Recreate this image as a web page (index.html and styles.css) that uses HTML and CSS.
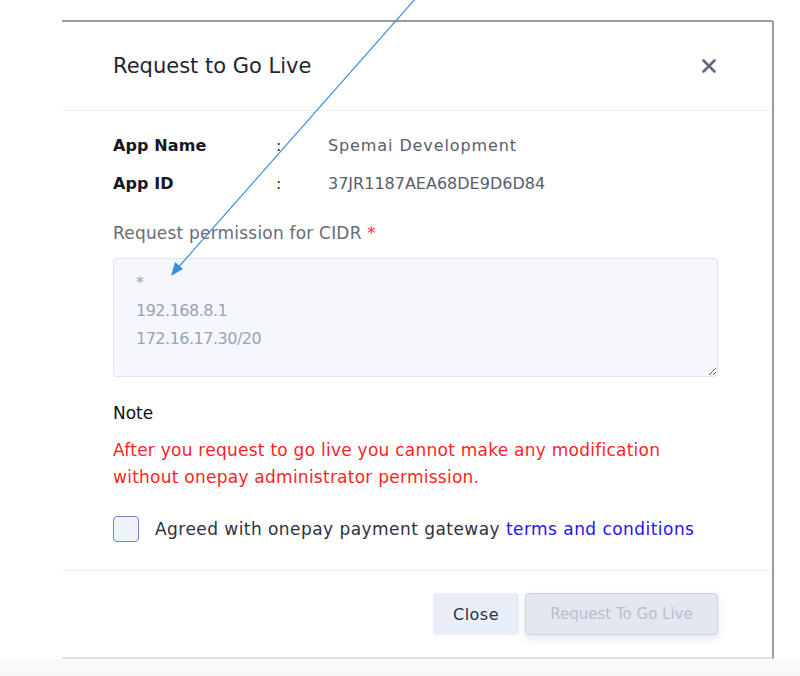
FILE: index.html
```html
<!DOCTYPE html>
<html lang="en">
<head>
    <meta charset="UTF-8">
    <meta name="viewport" content="width=device-width, initial-scale=1.0">
    <title>Request to Go Live</title>
    <link rel="stylesheet" href="styles.css">
</head>
<body>
    <div class="stage">
        <div class="modal">
            <div class="modal-header">
                <h2 class="modal-title">Request to Go Live</h2>
                <button class="btn-close" type="button" aria-label="Close">
                    <svg width="16" height="16" viewBox="0 0 16 16">
                        <path d="M2.5 2.5 L13.5 13.5 M13.5 2.5 L2.5 13.5" stroke="#5f6b7d" stroke-width="2.6" stroke-linecap="round"/>
                    </svg>
                </button>
            </div>

            <div class="modal-body">
                <div class="info-row">
                    <span class="info-label">App Name</span>
                    <span class="info-sep">:</span>
                    <span class="info-value info-name">Spemai Development</span>
                </div>
                <div class="info-row">
                    <span class="info-label">App ID</span>
                    <span class="info-sep">:</span>
                    <span class="info-value info-id">37JR1187AEA68DE9D6D84</span>
                </div>

                <label class="field-label" for="cidr">Request permission for CIDR <span class="req">*</span></label>
                <textarea id="cidr" class="cidr-input" placeholder="*&#10;192.168.8.1&#10;172.16.17.30/20"></textarea>

                <div class="note-title">Note</div>
                <p class="note-text">After you request to go live you cannot make any modification without onepay administrator permission.</p>

                <label class="agree">
                    <input type="checkbox" class="agree-box">
                    <span>Agreed with onepay payment gateway <a href="#" class="terms">terms and conditions</a></span>
                </label>
            </div>

            <div class="modal-footer">
                <button class="btn btn-light" type="button">Close</button>
                <button class="btn btn-primary" type="button" disabled>Request To Go Live</button>
            </div>
        </div>
        <div class="backdrop-edge"></div>
    </div>

    <!-- pointer to the CIDR wildcard line -->
    <svg class="callout" width="800" height="676" viewBox="0 0 800 676">
        <line x1="416" y1="-2" x2="176" y2="270" stroke="#3a8ee0" stroke-width="1.2"/>
        <polygon points="171,276 175,262 183,269" fill="#3a8ee0"/>
    </svg>
</body>
</html>
```

FILE: styles.css
```css
body {
    margin: 0;
    background: #ffffff;
    font-family: 'DejaVu Sans', 'Open Sans', sans-serif;
    color: #1f2433;
}
.stage {
    position: relative;
    padding-top: 20px;
}
.modal {
    margin-left: 62px;
    width: 710px;
    background: #fff;
    border-top: 2px solid #9b9b9b;
    border-right: 2px solid #9b9b9b;
    border-bottom: 2px solid #dbe1ef;
    border-top-right-radius: 3px;
}
.modal-header {
    display: flex;
    align-items: center;
    justify-content: space-between;
    height: 88px;
    padding: 0 54px 0 51px;
    border-bottom: 1px solid #edf1f7;
}
.modal-title {
    margin: 0;
    font-size: 21px;
    font-weight: normal;
    color: #1f2433;
}
.btn-close {
    border: none;
    background: none;
    padding: 0;
    width: 18px;
    height: 18px;
    display: flex;
    align-items: center;
    justify-content: center;
    cursor: pointer;
}
.modal-body {
    padding: 16px 54px 28px 51px;
    font-size: 17px;
    letter-spacing: 0.45px;
}
.info-row {
    display: flex;
    line-height: 38px;
    font-size: 16px;
}
.info-label {
    width: 163px;
    font-weight: bold;
    letter-spacing: 0.1px;
    color: #16181f;
}
.info-sep {
    width: 52px;
    color: #333;
}
.info-value {
    color: #5a5d6c;
}
.info-name {
    letter-spacing: 0.9px;
}
.info-id {
    letter-spacing: 0;
}
.field-label {
    display: block;
    margin-top: 18px;
    color: #686b78;
    line-height: 24px;
    letter-spacing: 0.2px;
}
.req {
    color: #f0334d;
}
.cidr-input {
    display: block;
    box-sizing: border-box;
    width: 100%;
    height: 119px;
    margin-top: 13px;
    padding: 10px 22px;
    background: #f5f7fc;
    border: 1px solid #dfe5ef;
    border-radius: 4px;
    font-family: inherit;
    font-size: 16px;
    letter-spacing: -0.5px;
    line-height: 28px;
    color: #2a2f3d;
}
.cidr-input::placeholder {
    color: #9aa4b6;
}
.note-title {
    margin-top: 24px;
    color: #111;
    line-height: 24px;
    letter-spacing: 0;
}
.note-text {
    margin: 12px 0 0;
    color: #ff1f1f;
    line-height: 27px;
    letter-spacing: 0.25px;
}
.agree {
    display: flex;
    align-items: center;
    gap: 16px;
    margin-top: 25px;
    color: #2e3140;
}
.agree-box {
    appearance: none;
    -webkit-appearance: none;
    flex: none;
    margin: 0;
    width: 26px;
    height: 26px;
    border: 1.5px solid #6f86c4;
    border-radius: 4px;
    background: #eef2fb;
}
.terms {
    color: #2613f0;
    text-decoration: none;
}
.modal-footer {
    display: flex;
    justify-content: flex-end;
    gap: 6px;
    padding: 22px 54px 22px 0;
    border-top: 1px solid #edf1f7;
}
.btn {
    height: 42px;
    padding: 0;
    border-radius: 4px;
    font-family: inherit;
    white-space: nowrap;
    cursor: pointer;
}
.btn-light {
    border: none;
    background: #e9eff8;
    color: #2a3247;
    width: 86px;
    font-size: 16px;
    letter-spacing: 0.5px;
}
.btn-primary {
    width: 193px;
    background: #e3e7ef;
    border: 1px solid #ccd3e0;
    color: #b8c0cf;
    font-size: 15px;
    box-shadow: 0 4px 10px rgba(40, 60, 100, 0.12);
}
.backdrop-edge {
    height: 20px;
    background: linear-gradient(#fbfbfb, #f4f4f4);
}
.callout {
    position: absolute;
    top: 0;
    left: 0;
    pointer-events: none;
}
```
